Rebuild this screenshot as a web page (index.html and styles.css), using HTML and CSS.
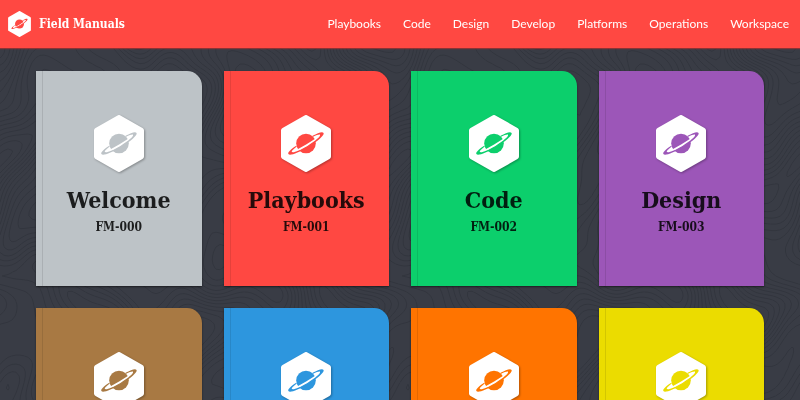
FILE: index.html
```html
<!DOCTYPE html>
<html lang="en">
<head>
<meta charset="utf-8">
<title>Field Manuals</title>
<meta name="viewport" content="width=device-width, initial-scale=1">
<link rel="stylesheet" href="styles.css">
</head>
<body>
<svg class="contours" aria-hidden="true">
  <defs>
    <pattern id="topo" width="400" height="400" patternUnits="userSpaceOnUse"><path id="topo-lines"/></pattern>
    <symbol id="saturn" viewBox="0 0 50 57">
      <path class="hex" d="M25 3 47 15.500V41.500L25 54 3 41.500V15.500Z"/>
      <circle class="ink" cx="25" cy="28.500" r="9.800"/>
      <g transform="rotate(-31 25 28.500)">
        <path class="gap" d="M8 28.500Q15 29.500 25 29.500Q35 29.500 42 28.500Q37 32 25 32Q13 32 8 28.500Z"/>
        <path class="ink" d="M4.500 28.500C4.500 26.500 9 25.500 15.500 25.300V26.300C11 26.800 8.500 27.500 8.500 28.300C8.500 30 16 31.300 25 31.300C34 31.300 41.500 30 41.500 28.300C41.500 27.500 39 26.800 34.500 26.300V25.300C41 25.500 45.500 26.500 45.500 28.500C45.500 31 36 32.500 25 32.500C14 32.500 4.500 31 4.500 28.500Z"/>
      </g>
    </symbol>
  </defs>
  <rect width="100%" height="100%" fill="url(#topo)"/>
</svg>
<header class="bar">
  <a class="brand" href="#"><svg class="brand-mark" aria-hidden="true"><use href="#saturn"/></svg>Field Manuals</a>
  <nav class="nav">
    <a href="#">Playbooks</a>
    <a href="#">Code</a>
    <a href="#">Design</a>
    <a href="#">Develop</a>
    <a href="#">Platforms</a>
    <a href="#">Operations</a>
    <a href="#">Workspace</a>
  </nav>
</header>
<main class="shelf">
  <a class="book silver" href="#"><svg class="mark" aria-hidden="true"><use href="#saturn"/></svg><h2>Welcome</h2><p>FM-000</p></a>
  <a class="book red" href="#"><svg class="mark" aria-hidden="true"><use href="#saturn"/></svg><h2>Playbooks</h2><p>FM-001</p></a>
  <a class="book green" href="#"><svg class="mark" aria-hidden="true"><use href="#saturn"/></svg><h2>Code</h2><p>FM-002</p></a>
  <a class="book purple" href="#"><svg class="mark" aria-hidden="true"><use href="#saturn"/></svg><h2>Design</h2><p>FM-003</p></a>
  <a class="book brown" href="#" aria-label="Develop"><svg class="mark" aria-hidden="true"><use href="#saturn"/></svg></a>
  <a class="book blue" href="#" aria-label="Platforms"><svg class="mark" aria-hidden="true"><use href="#saturn"/></svg></a>
  <a class="book orange" href="#" aria-label="Operations"><svg class="mark" aria-hidden="true"><use href="#saturn"/></svg></a>
  <a class="book yellow" href="#" aria-label="Workspace"><svg class="mark" aria-hidden="true"><use href="#saturn"/></svg></a>
</main>
<script src="contours.js"></script>
</body>
</html>
```
FILE: styles.css
```css
* { box-sizing: border-box; }
html { scrollbar-width: none; }
body {
  margin: 0;
  background: #393c45;
  font-family: "DejaVu Serif Condensed", "DejaVu Serif", serif;
}
a { color: inherit; text-decoration: none; }
.contours {
  position: fixed;
  inset: 0;
  z-index: -1;
  width: 100%;
  height: 100%;
}
#topo-lines { fill: none; stroke: #2d3038; stroke-width: 1; opacity: .6; }
.bar {
  display: flex;
  align-items: center;
  justify-content: space-between;
  height: 48px;
  padding: 0 11px 0 8px;
  background: #ff4842;
  color: #fff;
  box-shadow: 0 1px 1px rgba(160, 50, 50, .8);
  --ink: #ff4842;
}
.brand {
  display: flex;
  align-items: center;
  gap: 8px;
  font-size: 12px;
  font-weight: bold;
  white-space: nowrap;
}
.brand-mark { width: 23px; height: 26px; }
.nav {
  display: flex;
  gap: 22px;
  font: 12px/20px Lato, sans-serif;
}
.shelf {
  display: grid;
  grid-template-columns: repeat(4, 1fr);
  gap: 22px;
  padding: 23px 36px;
}
.book {
  display: flex;
  flex-direction: column;
  align-items: center;
  aspect-ratio: 10 / 13;
  padding-top: 44px;
  border-radius: 0 15px 0 0;
  background: linear-gradient(90deg, transparent 6px, rgba(0, 0, 0, .1) 6px, rgba(0, 0, 0, .1) 7px, transparent 7px) var(--ink);
  box-shadow: 0 1px 2px rgba(0, 0, 0, .5);
  text-align: center;
}
.mark {
  width: 50px;
  height: 57px;
  filter: drop-shadow(1px 1px 1px rgba(0, 0, 0, .3));
}
.hex { fill: #fff; stroke: #fff; stroke-width: 6; stroke-linejoin: round; }
.gap { fill: #fff; }
.ink { fill: var(--ink); }
.book h2, .book p { margin: 0; font-weight: bold; color: rgba(0, 0, 0, .85); }
.book h2 { margin-top: 12px; font-size: 23px; line-height: 32px; }
.book p { margin-top: 3px; font-size: 12px; line-height: 16px; }
.silver { --ink: #bdc3c7; }
.red { --ink: #ff4842; }
.green { --ink: #0ccf6c; }
.purple { --ink: #9c56b8; }
.brown { --ink: #a87943; }
.blue { --ink: #2d96de; }
.orange { --ink: #ff7400; }
.yellow { --ink: #ebdc00; }
```
FILE: contours.js
```js
// Traces the level lines of a periodic height field into one repeating tile.
const SIZE = 400, STEP = 4, TAU = Math.PI * 2;
function height(px, py) {
  const x = px / SIZE * TAU, y = py / SIZE * TAU;
  const u = x + 0.4 * Math.sin(2 * y + 1) + 0.12 * Math.sin(5 * y + 3 * x);
  const v = y + 0.4 * Math.sin(2 * x) + 0.1 * Math.sin(6 * x - 2 * y);
  return 3 * Math.sin(u + 2 * v) + 3 * Math.sin(2 * u - v + 2) + 2 * Math.cos(3 * u + v) + 1.2 * Math.sin(4 * v - 2 * u);
}
let d = "";
for (let y = 0; y < SIZE; y += STEP) {
  for (let x = 0; x < SIZE; x += STEP) {
    const p = [[x, y], [x + STEP, y], [x + STEP, y + STEP], [x, y + STEP]];
    const h = p.map(q => height(q[0], q[1]));
    for (let level = Math.ceil(Math.min(...h)); level <= Math.max(...h); level++) {
      const hits = [];
      for (let i = 0; i < 4; i++) {
        const j = (i + 1) % 4;
        if ((h[i] < level) !== (h[j] < level)) {
          const t = (level - h[i]) / (h[j] - h[i]);
          hits.push((p[i][0] + t * (p[j][0] - p[i][0])).toFixed(1) + " " + (p[i][1] + t * (p[j][1] - p[i][1])).toFixed(1));
        }
      }
      for (let k = 0; k + 1 < hits.length; k += 2) d += "M" + hits[k] + "L" + hits[k + 1];
    }
  }
}
document.getElementById("topo-lines").setAttribute("d", d);
```
